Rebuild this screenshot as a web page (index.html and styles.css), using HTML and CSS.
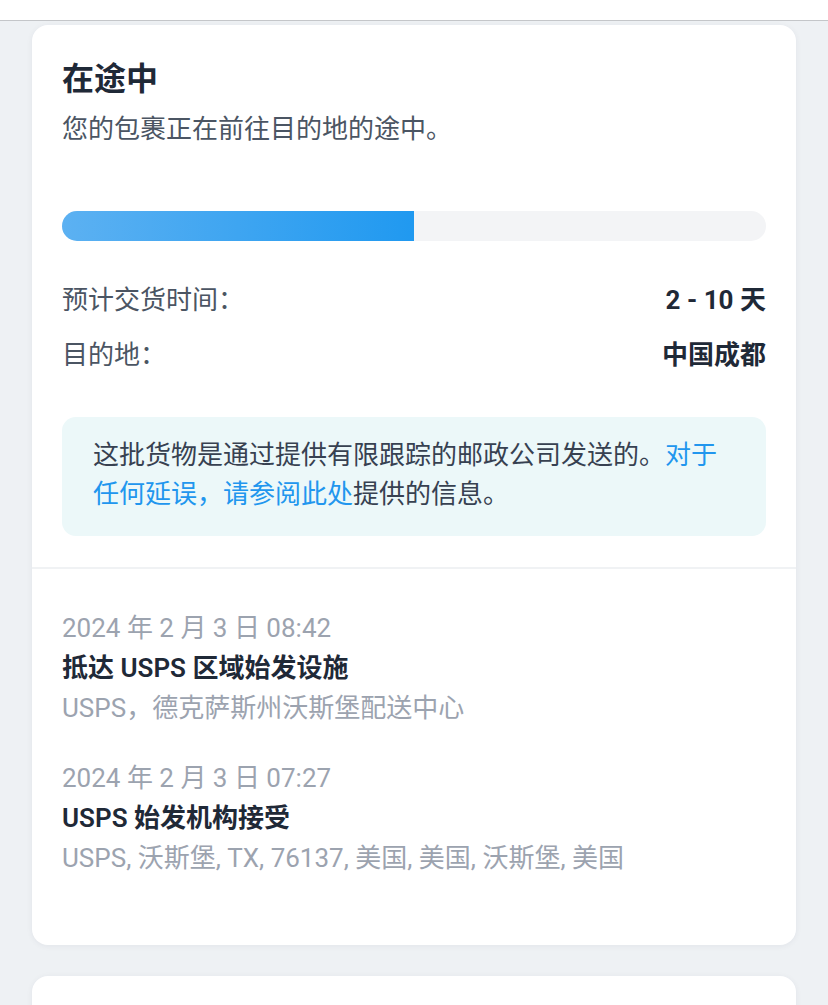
FILE: index.html
```html
<!DOCTYPE html>
<html lang="zh-CN">
<head>
<meta charset="utf-8">
<title>在途中</title>
<link rel="stylesheet" href="styles.css">
</head>
<body>
<div class="topbar"></div>
<main class="page">
  <section class="card">
    <div class="summary">
      <h1 class="title">在途中</h1>
      <p class="subtitle">您的包裹正在前往目的地的途中。</p>
      <div class="progress"><div class="progress-fill" style="width:50%"></div></div>
      <div class="row"><span class="label">预计交货时间：</span><span class="value">2 - 10 天</span></div>
      <div class="row row-second"><span class="label">目的地：</span><span class="value">中国成都</span></div>
      <div class="notice">这批货物是通过提供有限跟踪的邮政公司发送的。<a class="link" href="#">对于任何延误，请参阅此处</a>提供的信息。</div>
    </div>
    <div class="timeline">
      <div class="event">
        <div class="event-date">2024 年 2 月 3 日 08:42</div>
        <div class="event-title">抵达 USPS 区域始发设施</div>
        <div class="event-place">USPS，德克萨斯州沃斯堡配送中心</div>
      </div>
      <div class="event">
        <div class="event-date">2024 年 2 月 3 日 07:27</div>
        <div class="event-title">USPS 始发机构接受</div>
        <div class="event-place">USPS, 沃斯堡, TX, 76137, 美国, 美国, 沃斯堡, 美国</div>
      </div>
    </div>
  </section>
  <section class="card card-next"></section>
</main>
</body>
</html>
```

FILE: styles.css
```css
* { box-sizing: border-box; }
html, body { margin: 0; padding: 0; }
body {
  background: #eef1f4;
  font-family: "Roboto", "Noto Sans CJK SC", sans-serif;
  color: #1f2937;
  overflow: hidden;
  height: 1005px;
}
.topbar {
  height: 21px;
  background: #ffffff;
  border-bottom: 1px solid #c4c6c9;
}
.page {
  padding: 4px 32px 0 32px;
  display: flex;
  flex-direction: column;
  gap: 31px;
}
.card {
  background: #ffffff;
  border-radius: 16px;
  box-shadow: 0 1px 6px rgba(30, 40, 60, 0.06);
}
.summary {
  padding: 30px 30px 31px 30px;
  border-bottom: 2px solid #f0f2f4;
}
.title {
  margin: 0;
  font-size: 32px;
  line-height: 48px;
  font-weight: 700;
  color: #1f2937;
}
.subtitle {
  margin: 6px 0 0 0;
  font-size: 26px;
  line-height: 40px;
  color: #4b5563;
}
.progress {
  margin-top: 62px;
  height: 30px;
  border-radius: 15px;
  background: #f3f4f6;
  overflow: hidden;
}
.progress-fill {
  height: 100%;
  background: linear-gradient(90deg, #5cb1f2 0%, #2099f0 100%);
}
.row {
  display: flex;
  justify-content: space-between;
  align-items: center;
  margin-top: 39px;
  font-size: 26px;
  line-height: 40px;
}
.row-second { margin-top: 15px; }
.label { color: #4b5563; }
.value { font-weight: 700; color: #1f2937; }
.notice {
  margin-top: 42px;
  background: #ecf8f9;
  border-radius: 14px;
  padding: 19px 32px 22px 31px;
  font-size: 26px;
  line-height: 39px;
  color: #374151;
}
.link { color: #2196ee; text-decoration: none; }
.timeline {
  padding: 39px 30px 67px 30px;
  display: flex;
  flex-direction: column;
  gap: 30px;
}
.event { font-size: 26px; line-height: 40px; }
.event-date { color: #9ca3af; }
.event-title { font-weight: 600; color: #1f2937; }
.event-place { color: #9ca3af; }
.card-next { height: 60px; }
```
